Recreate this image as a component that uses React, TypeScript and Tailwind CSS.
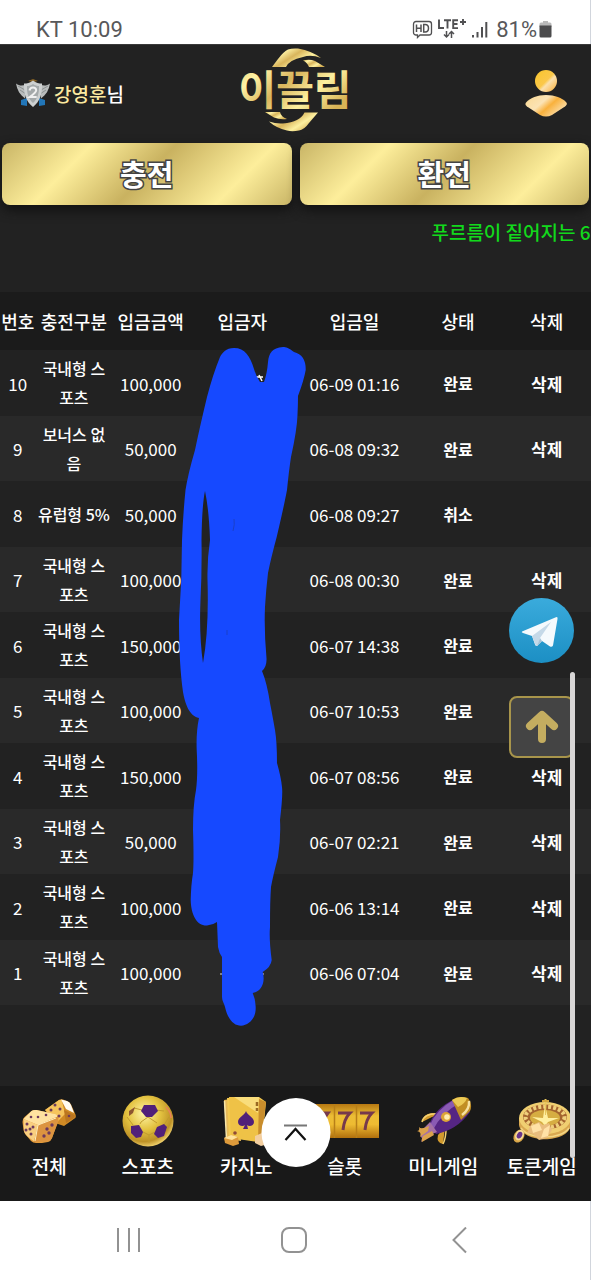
import type { ReactNode } from 'react';

interface Deposit {
  no: number;
  type: string;
  amount: string;
  date: string;
  status: string;
  removable: boolean; // 취소된 건은 삭제 버튼 없음
}

const deposits: Deposit[] = [
  { no: 10, type: '국내형 스포츠', amount: '100,000', date: '06-09 01:16', status: '완료', removable: true },
  { no: 9, type: '보너스 없음', amount: '50,000', date: '06-08 09:32', status: '완료', removable: true },
  { no: 8, type: '유럽형 5%', amount: '50,000', date: '06-08 09:27', status: '취소', removable: false },
  { no: 7, type: '국내형 스포츠', amount: '100,000', date: '06-08 00:30', status: '완료', removable: true },
  { no: 6, type: '국내형 스포츠', amount: '150,000', date: '06-07 14:38', status: '완료', removable: true },
  { no: 5, type: '국내형 스포츠', amount: '100,000', date: '06-07 10:53', status: '완료', removable: true },
  { no: 4, type: '국내형 스포츠', amount: '150,000', date: '06-07 08:56', status: '완료', removable: true },
  { no: 3, type: '국내형 스포츠', amount: '50,000', date: '06-07 02:21', status: '완료', removable: true },
  { no: 2, type: '국내형 스포츠', amount: '100,000', date: '06-06 13:14', status: '완료', removable: true },
  { no: 1, type: '국내형 스포츠', amount: '100,000', date: '06-06 07:04', status: '완료', removable: true },
];

const columns = ['번호', '충전구분', '입금금액', '입금자', '입금일', '상태', '삭제'];

/* 휴대폰 상태 표시줄 */
function StatusBar() {
  return (
    <div className="flex h-11 items-end justify-between border-r border-gray-300 bg-white px-9 pb-0.5 font-['Roboto',sans-serif] text-[22px] leading-6 text-[#58585a]">
      <span>KT 10:09</span>
      <div className="flex items-center">
        <svg width="84" height="24" viewBox="0 0 84 24" fill="none" stroke="#505052">
          <path d="M4 3.500h13a2.500 2.500 0 0 1 2.500 2.500v8.500a2.500 2.500 0 0 1-2.500 2.500H8l-2.500 2.500V17H4a2.500 2.500 0 0 1-2.500-2.500V6A2.500 2.500 0 0 1 4 3.500z" strokeWidth="1.300" />
          <path d="M4.500 6.500v7.500M9 6.500v7.500M4.500 10.200H9M11.700 6.500v7.500h1.500q3.300 0 3.300-3.700t-3.300-3.800z" strokeWidth="1.500" />
          <path d="M27 1.500v8.500h5M32 2.300h7M35.500 2.300V10.500M46 2.300h-4.800v7.800H46M41.200 6h4.300M51 1v6M48 4h6" strokeWidth="1.900" />
          <path d="M34.500 13v6M32 16.500l2.500 2.500 2.500-2.500M39.500 20v-6M37 16l2.500-2.500L42 16" strokeWidth="1.500" />
          <path d="M61 19.500v-2.500M65.500 19.500v-5.500M70 19.500V9M74.300 19.500V4" strokeWidth="2" />
        </svg>
        <span>81%</span>
        <svg width="17" height="24" viewBox="0 0 17 24">
          <path d="M6 3h5v1.500h2A1.500 1.500 0 0 1 14.500 6v3h-12V6A1.500 1.500 0 0 1 4 4.500h2z" fill="#b9b9b9" />
          <path d="M2.500 7.500h12V18a1.500 1.500 0 0 1-1.500 1.500H4A1.500 1.500 0 0 1 2.500 18z" fill="#4b4b4d" />
        </svg>
      </div>
    </div>
  );
}

function LevelBadge() {
  return (
    <svg width="34" height="30" viewBox="0 0 34 30">
      <path d="M5 21l6-2v8l-6-1zM29 21l-6-2v8l6-1z" fill="#2276b8" />
      <path d="M0 4.500c4 3 7 2 10 1l-1 14C4 16 1 11 0 4.500zM34 4.500c-4 3-7 2-10 1l1 14C30 16 33 11 34 4.500z" fill="#b9bcbc" />
      <path d="M2 7l7 4M4 11l6 4M32 7l-7 4M30 11l-6 4" stroke="#8c9191" />
      <path d="M12 2l5-2 5 2-5 1z" fill="#8a6425" />
      <path d="M17 1.500c3 2.500 6 3 9 3 .5 10-2 18-9 23.500C10 22.500 7.500 14.500 8 4.500c3 0 6-.5 9-3z" fill="#cdd0d0" />
      <path d="M17 5c2 1.500 4 2 6 2 .3 7-1.500 13-6 17-4.500-4-6.300-10-6-17 2 0 4-.5 6-2z" fill="#a4a9aa" />
      <path d="M13.500 11.500q.5-3 3.500-3t3.200 2.800q0 2.200-6.500 6.700h7" fill="none" stroke="#f0f0f0" strokeWidth="2" />
    </svg>
  );
}

function Logo() {
  return (
    <svg width="114" height="86" viewBox="0 0 114 86" role="img" aria-label="이끌림">
      <defs>
        <linearGradient id="gold" x1="0" y1="0" x2="1" y2=".6">
          <stop offset="0" stopColor="#e3c25f" />
          <stop offset=".25" stopColor="#fff3a6" />
          <stop offset=".5" stopColor="#d9b55c" />
          <stop offset=".75" stopColor="#fdf0a0" />
          <stop offset="1" stopColor="#d8b356" />
        </linearGradient>
      </defs>
      <path d="M34 20L40 12Q46 4 50 2.500Q54 1 60 1.500Q74 4 83 11Q73 7 65 10Q51 13 48 20z" fill="url(#gold)" />
      <path d="M65 13.500Q72 12 77 14L87 20H71Q69 15 65 13.500z" fill="url(#gold)" />
      <path d="M27 65H42Q43 70 49 72Q42 73 36 70.500z" fill="url(#gold)" />
      <path d="M31 74.500Q38 77 45 76.500Q62 75 66.500 65.500H80L71 76Q66 83 61 83.500Q54 85 49 83.500Q38 81 31 74.500z" fill="url(#gold)" />
      <text
        x="57"
        y="58"
        textAnchor="middle"
        fill="url(#gold)"
        stroke="#222222"
        strokeWidth="2"
        paintOrder="stroke"
        className="font-['Noto_Sans_CJK_KR',sans-serif] text-[41px] font-bold"
      >
        이끌림
      </text>
    </svg>
  );
}

function ProfileIcon() {
  return (
    <svg width="42" height="48" viewBox="0 0 42 48">
      <defs>
        <linearGradient id="profile" x1="0" y1="0" x2="1" y2="1">
          <stop offset="0" stopColor="#f8c52c" />
          <stop offset=".5" stopColor="#fbc84a" />
          <stop offset=".6" stopColor="#fbe0ae" />
          <stop offset="1" stopColor="#f9ac30" />
        </linearGradient>
        <linearGradient id="shoulder" x1="0" y1="0" x2="1" y2=".6">
          <stop offset="0" stopColor="#fbd890" />
          <stop offset=".45" stopColor="#fbe3b5" />
          <stop offset=".65" stopColor="#f9b13c" />
          <stop offset="1" stopColor="#fbe0b0" />
        </linearGradient>
      </defs>
      <circle cx="21" cy="11" r="11" fill="url(#profile)" />
      <path d="M21 25c9 0 16 3 20 7 1.500 1.500 1 3-1 4.500L27 45q-6 3-12 0L2 36.500C0 35 0 33.500 1.500 32c4-4 10.500-7 19.500-7z" fill="url(#shoulder)" />
    </svg>
  );
}

function GoldButton({ children }: { children: ReactNode }) {
  return (
    <button className="h-[62px] flex-1 rounded-lg bg-[linear-gradient(135deg,#c9b566_0%,#fdee9b_26%,#c9b260_50%,#fdee9b_78%,#c9b566_100%)] text-[29px] font-bold text-white shadow-[0_5px_12px_#111] [-webkit-text-stroke:3px_#444] [paint-order:stroke]">
      {children}
    </button>
  );
}

/* 입금자 이름을 가리는 파란 펜 자국 */
function Scribble() {
  return (
    <svg className="pointer-events-none absolute top-[54px] left-[178px]" width="130" height="682" viewBox="178 346 130 682">
      <path d="M255 377h8M259 375l3 6" stroke="#fff" strokeWidth="1.500" />
      <path d="M220 974h3M262 974h2" stroke="#ddd" />
      <path
        fillRule="evenodd"
        fill="#1649ff"
        d="M234 348C226 348 222 353 220 357Q213 374 207 397Q200 426 195 450Q188 474 185.500 490Q183 515 182 540Q182 580 179 620Q179 665 183 692C185 703 189 716 199 718Q196 732 196.700 750Q198 775 196 790Q193 805 193 830Q194 860 193 873Q191 885 190.700 900C191 915 197 926 207 925.600Q213 925 217 922L218 947Q219 953 222 957V997C222 1001 224 1003 225 1007C228 1020 234 1025.700 241 1025.700C250 1025 257 1017 255.500 1005Q255 998 252.700 993C260 992 266 984 262.700 972Q271 967 271.700 960Q269 940 270 927Q270 900 271 887Q273 876 278 857Q281 837 280 820Q283 795 282 787Q281 777 277 763Q277 742 275 730Q272 713 270 703Q267 683 262 671Q267 667 266.500 658Q264 630 265 607Q266 590 268 573Q271 558 276.700 537Q284 506 287 490Q289 470 291 457Q297 430 297.500 415Q298 405 298 396Q304 380 305.700 370Q306 355 294 352C289 348 286 347 283 347C272 348 269 353 268 362Q267 374 264 382H260Q256 376 254 369C250 356 245 348 234 348ZM205 491Q209 510 210 540Q207 560 207.500 580Q209 630 203 663Q199 635 200.500 600Q202 570 201.500 540Q202 505 205 491Z"
      />
      <path d="M234 519q1 5-1 12M227 630v5" fill="none" stroke="#1b40c8" />
    </svg>
  );
}

function DepositTable() {
  return (
    <div className="relative">
      <table className="w-full table-fixed border-collapse text-center text-[17px] leading-[29px] text-white">
        <colgroup>
          <col className="w-[6%]" />
          <col className="w-[13%]" />
          <col className="w-[13%]" />
          <col className="w-[18%]" />
          <col className="w-[20%]" />
          <col className="w-[15%]" />
          <col className="w-[15%]" />
        </colgroup>
        <thead className="bg-[#1b1b1b] text-lg">
          <tr className="h-[58px]">
            {columns.map(name => (
              <th key={name} className="p-0 font-medium whitespace-nowrap">
                {name}
              </th>
            ))}
          </tr>
        </thead>
        <tbody>
          {deposits.map(row => (
            <tr key={row.no} className="odd:h-[66px] odd:bg-[#222222] even:h-[65px] even:bg-[#292929]">
              <td>{row.no}</td>
              <td className="text-base leading-[29px] font-medium">{row.type}</td>
              <td>{row.amount}</td>
              <td />
              <td>{row.date}</td>
              <td className="text-base font-bold">{row.status}</td>
              <td>{row.removable && <button className="font-bold">삭제</button>}</td>
            </tr>
          ))}
        </tbody>
      </table>
      <Scribble />
    </div>
  );
}

function DiceIcon() {
  return (
    <svg width="56" height="50" viewBox="0 0 56 50">
      <path d="M24 14L38 4q2-1 4-.5l5 2q2 1 3 3l4.500 10q1 3-1 4L43 30l-9-3z" fill="#d08a25" />
      <path d="M24 14L38 4q2-1 3 1l3 13-8 8z" fill="#f6c45c" />
      <path d="M40 3.500l6 1.500q3 1 4 4l3 8-8-4z" fill="#fffaf0" />
      <path d="M43 14l2 13 8-5q1.500-1 .5-3z" fill="#bb7620" />
      <path d="M10.500 15q2-1.500 5-1L34 18q3 1 3.500 4v3L31 42q-1 3-4 4l-6 1H15q-3 0-5-2l-5-6q-2-2-2.500-5L1.500 26q-.3-3 2-5z" fill="#e29a3a" />
      <path d="M10.500 15q2-1.500 5-1L34 18q3 1 2 3l-19 8L2.500 23z" fill="#ffe2a0" />
      <path d="M2.500 23L17 29l-4 16.500L6 40q-2-2-3-5z" fill="#f9cf80" />
      <path d="M17 29l18.500-8q2 1 1.500 4l-6 17q-1 3-4 3.500L13 46z" fill="#dc9440" />
      <path d="M17 29L14 45M17 29l18-7" stroke="#fff0c0" fill="none" />
      <g fill="#6d3a5c">
        <circle cx="6" cy="28" r="1.500" /><circle cx="12" cy="31" r="1.500" /><circle cx="9" cy="33" r="1.500" /><circle cx="5" cy="34" r="1.500" /><circle cx="10" cy="38" r="1.500" />
        <circle cx="10" cy="21" r="1.300" /><circle cx="17" cy="21" r="1.300" /><circle cx="25" cy="19" r="1.300" />
        <circle cx="31" cy="29" r="1.700" /><circle cx="26" cy="33" r="1.700" /><circle cx="28" cy="37" r="1.700" /><circle cx="23" cy="40" r="1.700" />
        <circle cx="34" cy="9" r="1.500" /><circle cx="39" cy="13" r="1.500" /><circle cx="30" cy="14" r="1.500" /><circle cx="38" cy="20" r="1.500" /><circle cx="48" cy="20" r="1.300" />
      </g>
    </svg>
  );
}

function BallIcon() {
  return (
    <svg width="52" height="52" viewBox="0 0 52 52">
      <defs>
        <radialGradient id="ball" cx=".42" cy=".35" r=".65">
          <stop offset="0" stopColor="#fff5a8" />
          <stop offset=".5" stopColor="#e3c240" />
          <stop offset=".85" stopColor="#bd9126" />
          <stop offset="1" stopColor="#e9c964" />
        </radialGradient>
      </defs>
      <circle cx="26" cy="26" r="25.500" fill="url(#ball)" />
      <path d="M26 22l-7 5-1 2M26 22l9 6M20 15l-8-2M34 15l8 1M21 37l6 3 6-3M27 40v8M11 30l-6-8M42 30l5-8" stroke="#c09b2e" fill="none" />
      <path d="M22 10h11l3 6-6 6h-6l-5-6z" fill="#512079" />
      <path d="M9 31l8-1 4 7-2 5-5 1-5-5z" fill="#512079" />
      <path d="M42 29l-7 3-3 7 4 4 6-2 3-9z" fill="#512079" />
      <path d="M7 16l6-4-2 6-4 3z" fill="#8d5530" />
      <path d="M44 12q5 5 5 11" stroke="#e9825a" strokeWidth="1.500" fill="none" />
    </svg>
  );
}

function CardsIcon() {
  return (
    <svg width="52" height="50" viewBox="0 0 52 50">
      <path d="M4 4l13-2 4 43-14-2z" fill="#e6b958" />
      <path d="M4.500 5l2 38" stroke="#f8e6a8" strokeWidth="1.500" />
      <path d="M7 2l32-1 7 5-4 40-33-5z" fill="#f3c950" />
      <path d="M39 3l7 3-5 41-5-1z" fill="#c98d2c" />
      <path d="M9 1l30 0-1 45-27-4z" fill="#efc247" />
      <path d="M14 1h25l-1 16z" fill="#f9dd7b" />
      <path d="M26 15c1 4 8 6 8 11 0 4-5 5-7 3l1 4h-5l2-4c-2 2-7 1-7-3 0-5 7-7 8-11z" fill="#512079" />
      <path d="M37 6v4M37 12v3" stroke="#9a6a22" strokeWidth="2.500" />
      <path d="M4 42l7-3 7 2 1 7-6 2-8-3z" fill="#dd9a3b" />
      <path d="M4 42l7-3 7 2-6 3z" fill="#ffe39b" />
      <circle cx="15" cy="37" r="1.800" fill="#8f4b37" />
      <path d="M35 40l7-3 6 3v8l-7 2-6-3z" fill="#f3cfa0" />
    </svg>
  );
}

function SlotIcon() {
  return (
    <svg width="68" height="36" viewBox="0 0 68 36">
      <defs>
        <linearGradient id="slot" x1="0" y1="0" x2="0" y2="1">
          <stop offset="0" stopColor="#b67812" />
          <stop offset=".35" stopColor="#ecbd35" />
          <stop offset=".6" stopColor="#eebb32" />
          <stop offset="1" stopColor="#b06f0d" />
        </linearGradient>
      </defs>
      <path d="M0 1h68v34H0z" fill="url(#slot)" />
      <path d="M23.500 1v34M45.500 1v34" stroke="#b87f18" strokeWidth="1.500" />
      <path d="M5 10h12q-5 6-6 17M27 10h12q-6 6-7 17M49 10h12q-6 6-7 17" fill="none" stroke="#76394c" strokeWidth="3" />
    </svg>
  );
}

function RocketIcon() {
  return (
    <svg width="60" height="50" viewBox="0 0 60 50">
      <path d="M19 21l-10 5q1-8 10-9l10 1zM32 31l-2 17q-7-1-5-9z" fill="#d29a2d" />
      <path d="M9 26q2-10 20-8M30 48q3-6 3-15" fill="none" stroke="#f4d071" strokeWidth="1.500" />
      <path d="M16 29Q22 12 42 3l15 13Q44 34 23 38z" fill="#552583" />
      <path d="M17 29Q23 14 42 3l5 4Q29 16 20 34z" fill="#8a5ab3" />
      <path d="M39 4q7-5 16-2 5 6 2 13l-9 9z" fill="#c18e23" />
      <path d="M39 4q7-5 15-2-2 6-9 9z" fill="#ecca55" />
      <path d="M56 5q1 8-7 14" fill="none" stroke="#f6e1a0" strokeWidth="2.500" />
      <circle cx="33" cy="21" r="5" fill="#dca438" />
      <circle cx="34" cy="21" r="2.800" fill="#ffedb0" />
      <path d="M17 26l7 10-7 3-9 7q2-4 0-5-1-4 2-8z" fill="#a671a5" />
      <path d="M16 30q-8 4-10 1 1 4-2 4 5 1 3 6l8-6zM19 35l-9 5q-2 4-1 6l12-7z" fill="#dba24c" />
    </svg>
  );
}

function RouletteIcon() {
  return (
    <svg width="64" height="50" viewBox="0 0 64 50">
      <path d="M9 22v7c3 19 49 19 52 0v-7z" fill="#d9a850" />
      <path d="M11 32c8 12 40 12 48 0" fill="none" stroke="#f3d684" strokeWidth="1.500" />
      <ellipse cx="35" cy="22" rx="26" ry="16" fill="#f0cf71" />
      <ellipse cx="35" cy="21" rx="22" ry="12.500" fill="#a4642f" />
      <ellipse cx="35" cy="21" rx="19.500" ry="10.500" fill="none" stroke="#efcf7c" strokeWidth="4" strokeDasharray="3 2" />
      <ellipse cx="35" cy="22" rx="15" ry="8" fill="#d6ad42" />
      <path d="M22 21l11 1 2-13 3 13 11 0-11 4-3 4-3-4z" fill="#fff0a0" />
      <path d="M34.500 3h2l-.5 16h-1z" fill="#e8c65c" />
      <path d="M32 5h7" stroke="#d5a741" strokeWidth="2" />
      <path d="M20 30l9-4 4 3 6-2 3 7-5 8-8 2-6-6-6-1z" fill="#e9bd7e" />
      <path d="M21 30l8-3 3 7-9 3zM34 33l6-4-2 11-7 2z" fill="#ffe1a6" />
      <g transform="rotate(30 9 40)">
        <ellipse cx="9" cy="40" rx="5" ry="7" fill="#dba849" />
        <ellipse cx="9" cy="39" rx="4" ry="5.500" fill="#f4dc9c" />
        <ellipse cx="9" cy="39" rx="2.500" ry="3.500" fill="#67348a" />
      </g>
    </svg>
  );
}

const menus = [
  { label: '전체', icon: <DiceIcon /> },
  { label: '스포츠', icon: <BallIcon /> },
  { label: '카지노', icon: <CardsIcon /> },
  { label: '슬롯', icon: <SlotIcon /> },
  { label: '미니게임', icon: <RocketIcon /> },
  { label: '토큰게임', icon: <RouletteIcon /> },
];

function BottomMenu() {
  return (
    <nav className="relative grid grid-cols-6 bg-[#191919] pt-2.5 pb-[21px] text-white">
      {menus.map(menu => (
        <a key={menu.label} href="#" className="flex flex-col items-center text-[19px] leading-7 font-medium whitespace-nowrap">
          <span className="mb-1.5 flex h-[50px] items-center">{menu.icon}</span>
          {menu.label}
        </a>
      ))}
      {/* 맨 위로 이동 버튼 */}
      <button aria-label="맨 위로" className="absolute top-3 left-1/2 flex size-[69px] -translate-x-1/2 items-center justify-center rounded-full bg-white">
        <svg width="26" height="20" viewBox="0 0 26 20" fill="none">
          <path d="M1.500 2.500h23" stroke="#777" strokeWidth="1.800" />
          <path d="M3 17L13 6l10 11" stroke="#111" strokeWidth="2.200" />
        </svg>
      </button>
    </nav>
  );
}

/* 안드로이드 하단 내비게이션 */
function SystemNav() {
  return (
    <div className="grid h-[79px] grid-cols-[1fr_72px_1fr] items-center border-r border-gray-300 bg-white">
      <button aria-label="최근 앱" className="justify-self-center">
        <svg width="26" height="26" viewBox="0 0 26 26" stroke="#929292" strokeWidth="2">
          <path d="M1 0v24M12 0v24M22 0v24" />
        </svg>
      </button>
      <button aria-label="홈" className="justify-self-center">
        <svg width="28" height="28" viewBox="0 0 28 28" fill="none" stroke="#929292" strokeWidth="2">
          <rect x="1" y="1" width="24" height="24" rx="7" />
        </svg>
      </button>
      <button aria-label="뒤로" className="justify-self-center">
        <svg width="18" height="28" viewBox="0 0 18 28" fill="none" stroke="#929292" strokeWidth="2">
          <path d="M14 .5L1.500 13 14 25.500" />
        </svg>
      </button>
    </div>
  );
}

export default function App() {
  return (
    <div className="relative flex min-h-screen flex-col overflow-hidden bg-[#222222] font-['Noto_Sans_CJK_KR',sans-serif]">
      <StatusBar />

      <header className="grid h-[99px] grid-cols-3 items-center border-t border-[#3a3a3a] px-4">
        <div className="flex items-center gap-1 text-[19px] font-medium text-white">
          <LevelBadge />
          <span>
            <span className="text-[#fbe9a0]">강영훈</span>님
          </span>
        </div>
        <a href="#" className="mb-2 justify-self-center">
          <Logo />
        </a>
        <button aria-label="내 정보" className="mr-2 justify-self-end">
          <ProfileIcon />
        </button>
      </header>

      <main className="flex-1">
        <div className="flex gap-2 px-0.5">
          <GoldButton>충전</GoldButton>
          <GoldButton>환전</GoldButton>
        </div>
        <p className="overflow-hidden pt-3 pb-[45px] pl-[73%] text-[19px] leading-[30px] font-medium whitespace-nowrap text-[#12d91c]">
          푸르름이 짙어지는 6
        </p>
        <DepositTable />
      </main>

      <BottomMenu />
      <SystemNav />

      <a href="#" aria-label="텔레그램" className="absolute top-[598px] right-[17px]">
        <svg width="65" height="65" viewBox="0 0 65 65">
          <defs>
            <linearGradient id="telegram" x1="0" y1="0" x2="0" y2="1">
              <stop offset="0" stopColor="#3aabdc" />
              <stop offset="1" stopColor="#1c8fc4" />
            </linearGradient>
          </defs>
          <circle cx="32.500" cy="32.500" r="32.500" fill="url(#telegram)" />
          <path d="M13 33.500L47.500 19q1.500 0 1 2L44 47.500q-1 2-3 1L33 43l-4.500 4.500q-2 1-2.500-1L23 38l-9-3q-2-.7-1-1.500z" fill="#f5fafd" />
          <path d="M23 38l19-14-11 16-2.500 8q-1.500 0-2-1z" fill="#c5d9e8" />
          <path d="M31 40l2 3-5 5z" fill="#a5c3d8" />
        </svg>
      </a>
      <button aria-label="위로" className="absolute top-[696px] right-[17px] flex h-[62px] w-[65px] items-center justify-center rounded-lg border-2 border-[#a8954b] bg-[#444444]">
        <svg width="34" height="36" viewBox="0 0 34 36" fill="none" stroke="#c4ad60" strokeWidth="8" strokeLinecap="round" strokeLinejoin="round">
          <path d="M5 17L17 6l12 11M17 8v22" />
        </svg>
      </button>
      {/* 스크롤바 */}
      <div className="absolute top-[672px] right-4 bottom-[122px] w-[5px] rounded-full bg-[#d8d6d6]" />
    </div>
  );
}
